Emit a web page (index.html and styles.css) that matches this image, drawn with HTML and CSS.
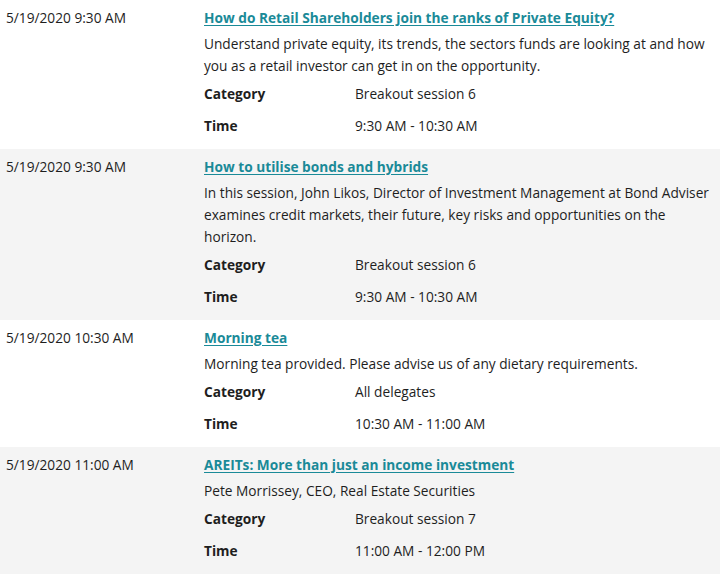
FILE: index.html
```html
<!DOCTYPE html>
<html>
<head>
<meta charset="utf-8">
<link rel="stylesheet" href="styles.css">
</head>
<body>
<div class="agenda">
  <div class="row">
    <div class="when">5/19/2020 9:30 AM</div>
    <div class="info">
      <a class="title" href="#">How do Retail Shareholders join the ranks of Private Equity?</a>
      <p class="desc">Understand private equity, its trends, the sectors funds are looking at and how you as a retail investor can get in on the opportunity.</p>
      <div class="meta">
        <div class="label">Category</div><div class="value">Breakout session 6</div>
        <div class="label">Time</div><div class="value">9:30 AM - 10:30 AM</div>
      </div>
    </div>
  </div>
  <div class="row alt">
    <div class="when">5/19/2020 9:30 AM</div>
    <div class="info">
      <a class="title" href="#">How to utilise bonds and hybrids</a>
      <p class="desc">In this session, John Likos, Director of Investment Management at Bond Adviser examines credit markets, their future, key risks and opportunities on the horizon.</p>
      <div class="meta">
        <div class="label">Category</div><div class="value">Breakout session 6</div>
        <div class="label">Time</div><div class="value">9:30 AM - 10:30 AM</div>
      </div>
    </div>
  </div>
  <div class="row">
    <div class="when">5/19/2020 10:30 AM</div>
    <div class="info">
      <a class="title" href="#">Morning tea</a>
      <p class="desc">Morning tea provided. Please advise us of any dietary requirements.</p>
      <div class="meta">
        <div class="label">Category</div><div class="value">All delegates</div>
        <div class="label">Time</div><div class="value">10:30 AM - 11:00 AM</div>
      </div>
    </div>
  </div>
  <div class="row alt">
    <div class="when">5/19/2020 11:00 AM</div>
    <div class="info">
      <a class="title" href="#">AREITs: More than just an income investment</a>
      <p class="desc">Pete Morrissey, CEO, Real Estate Securities</p>
      <div class="meta">
        <div class="label">Category</div><div class="value">Breakout session 7</div>
        <div class="label">Time</div><div class="value">11:00 AM - 12:00 PM</div>
      </div>
    </div>
  </div>
</div>
</body>
</html>
```
FILE: styles.css
```css
html, body {
  margin: 0;
  padding: 0;
  background: #fff;
}
body {
  font-family: "Open Sans", "Liberation Sans", sans-serif;
  font-size: 13.7px;
  line-height: 22px;
  color: #1e1e1e;
}
.agenda {
  display: flex;
  flex-direction: column;
}
.row {
  display: grid;
  grid-template-columns: 198px 1fr;
  padding: 7px 4px 7px 6px;
}
.row.alt {
  background: #f4f4f4;
}
.when {
  white-space: nowrap;
}
.info {
  display: flex;
  flex-direction: column;
  align-items: flex-start;
}
.title {
  color: #1a8a98;
  font-weight: 700;
  text-decoration: underline;
  text-underline-offset: 2px;
}
.desc {
  margin: 4px 0 0 0;
}
.meta {
  display: grid;
  grid-template-columns: 151px auto;
  margin-top: 1px;
}
.label {
  font-weight: 700;
  padding: 5px 0 5px;
}
.value {
  padding: 5px 0 5px;
}
```
